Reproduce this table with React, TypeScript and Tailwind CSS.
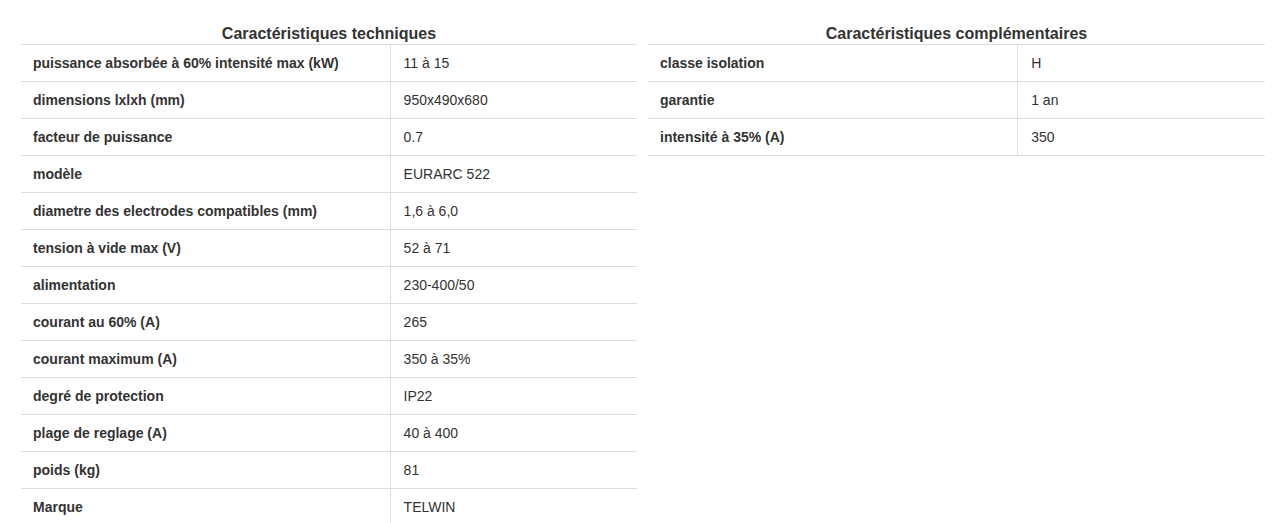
import React from "react";

type Row = [string, string];

const techniques: Row[] = [
  ["puissance absorbée à 60% intensité max (kW)", "11 à 15"],
  ["dimensions lxlxh (mm)", "950x490x680"],
  ["facteur de puissance", "0.7"],
  ["modèle", "EURARC 522"],
  ["diametre des electrodes compatibles (mm)", "1,6 à 6,0"],
  ["tension à vide max (V)", "52 à 71"],
  ["alimentation", "230-400/50"],
  ["courant au 60% (A)", "265"],
  ["courant maximum (A)", "350 à 35%"],
  ["degré de protection", "IP22"],
  ["plage de reglage (A)", "40 à 400"],
  ["poids (kg)", "81"],
  ["Marque", "TELWIN"],
];

const complementaires: Row[] = [
  ["classe isolation", "H"],
  ["garantie", "1 an"],
  ["intensité à 35% (A)", "350"],
];

const SpecTable: React.FC<{ title: string; rows: Row[]; width: string }> = ({ title, rows, width }) => (
  <div className={width}>
    <div className="text-center text-[16px] leading-[20px] font-bold text-[#333]">{title}</div>
    <div className="border-b border-[#ddd]">
      {rows.map(([label, value]) => (
        <div key={label} className="flex border-t border-[#ddd] text-[14px] leading-[20px] text-[#333]">
          <div className="w-[60%] shrink-0 px-3 py-2 font-bold border-r border-[#ddd]">{label}</div>
          <div className="flex-1 px-[13px] py-2">{value}</div>
        </div>
      ))}
    </div>
  </div>
);

export default function App() {
  return (
    <div className="bg-white min-h-screen pt-6 pl-[21px] flex items-start gap-[11px] font-['Liberation_Sans',Arial,sans-serif]">
      <SpecTable title="Caractéristiques techniques" rows={techniques} width="w-[616px]" />
      <SpecTable title="Caractéristiques complémentaires" rows={complementaires} width="w-[617px]" />
    </div>
  );
}
